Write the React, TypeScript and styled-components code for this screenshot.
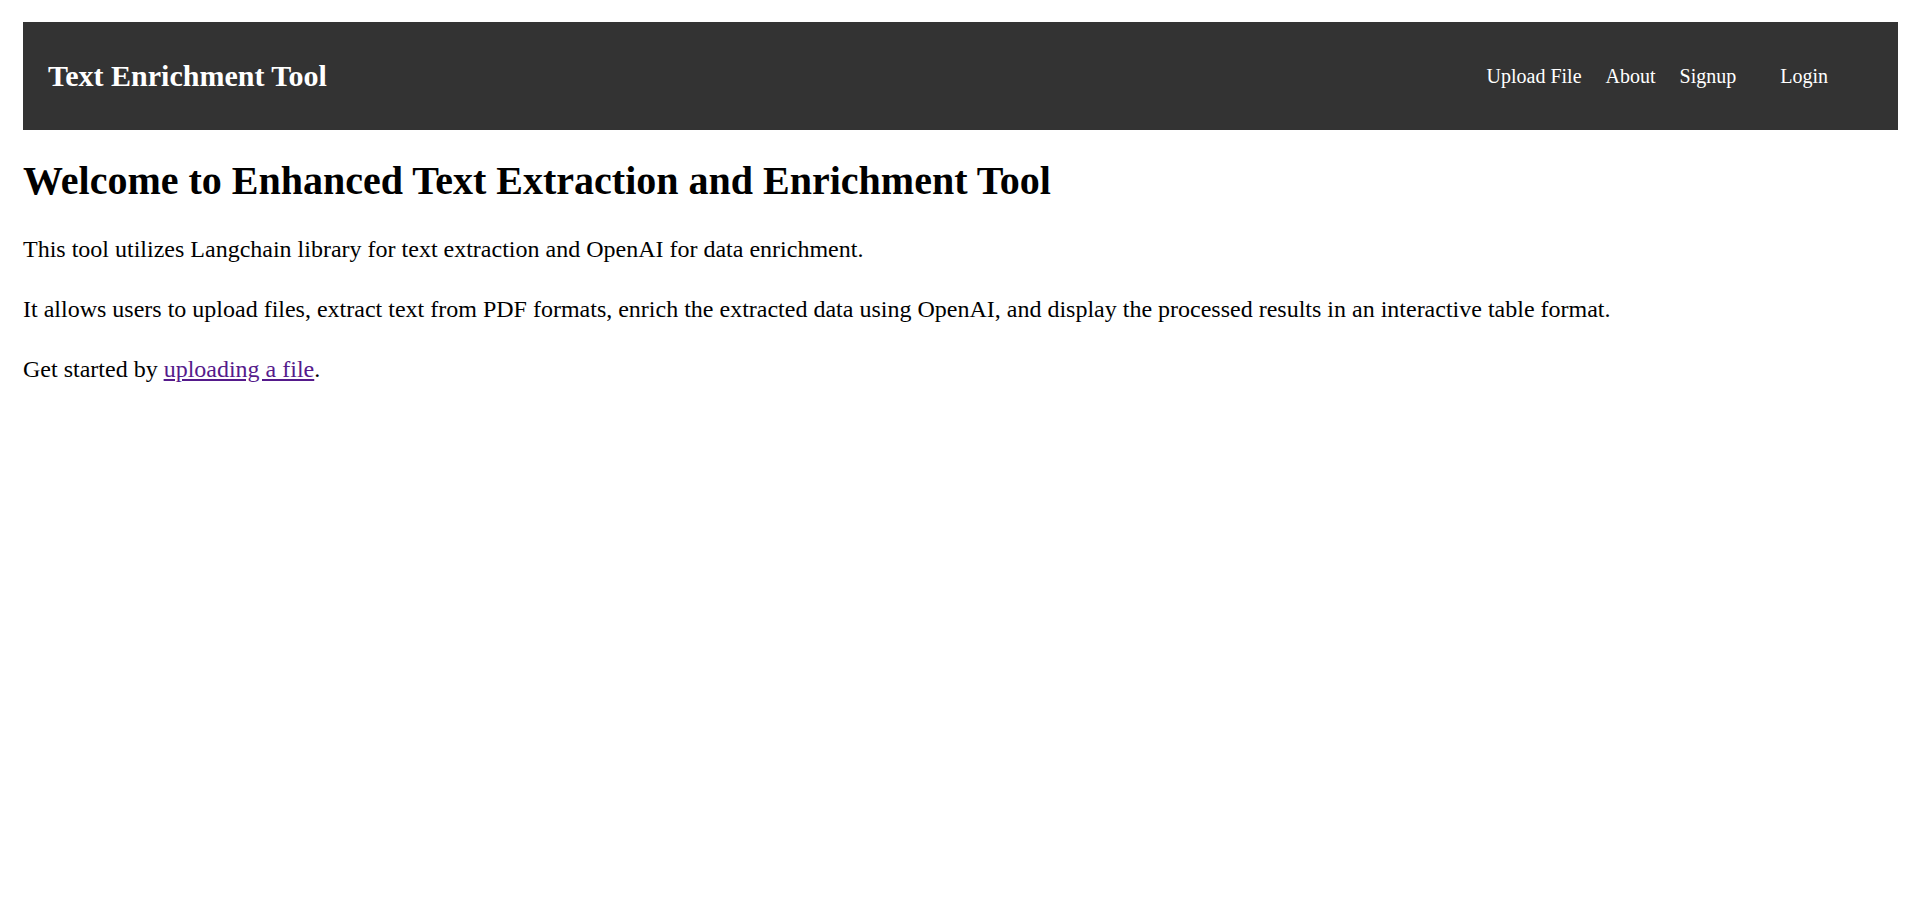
import styled, { createGlobalStyle } from 'styled-components';

const GlobalStyle = createGlobalStyle`
  html, body {
    margin: 0;
    padding: 0;
    background: #ffffff;
  }
  body {
    font-family: 'Liberation Serif', 'Times New Roman', serif;
    color: #000;
  }
`;

const Page = styled.div`
  padding: 22px 22px 0 23px;
`;

const Header = styled.header`
  display: flex;
  align-items: center;
  justify-content: space-between;
  height: 108px;
  padding: 0 70px 0 25px;
  background-color: #333333;
  color: #fff;
`;

const Logo = styled.div`
  font-size: 30px;
  font-weight: 700;
  line-height: 1;
`;

const Nav = styled.nav`
  display: flex;
  align-items: center;
  gap: 24px;
`;

const NavLink = styled.a<{ $extra?: boolean }>`
  color: #fff;
  text-decoration: none;
  font-size: 20px;
  margin-left: ${(p) => (p.$extra ? '20px' : '0')};
`;

const Title = styled.h1`
  font-size: 40px;
  font-weight: 700;
  line-height: normal;
  margin: 26.8px 0 27px;
`;

const Text = styled.p`
  font-size: 24px;
  line-height: 1.5;
  margin: 24px 0;
`;

const TextLink = styled.a`
  color: #551a8b;
  text-decoration: underline;
`;

const App = () => {
  return (
    <Page>
      <GlobalStyle />
      <Header>
        <Logo>Text Enrichment Tool</Logo>
        <Nav>
          <NavLink href="#">Upload File</NavLink>
          <NavLink href="#">About</NavLink>
          <NavLink href="#">Signup</NavLink>
          <NavLink href="#" $extra>
            Login
          </NavLink>
        </Nav>
      </Header>
      <main>
        <Title>Welcome to Enhanced Text Extraction and Enrichment Tool</Title>
        <Text>This tool utilizes Langchain library for text extraction and OpenAI for data enrichment.</Text>
        <Text>
          It allows users to upload files, extract text from PDF formats, enrich the extracted data using OpenAI, and
          display the processed results in an interactive table format.
        </Text>
        <Text>
          Get started by <TextLink href="#">uploading a file</TextLink>.
        </Text>
      </main>
    </Page>
  );
};

export default App;
